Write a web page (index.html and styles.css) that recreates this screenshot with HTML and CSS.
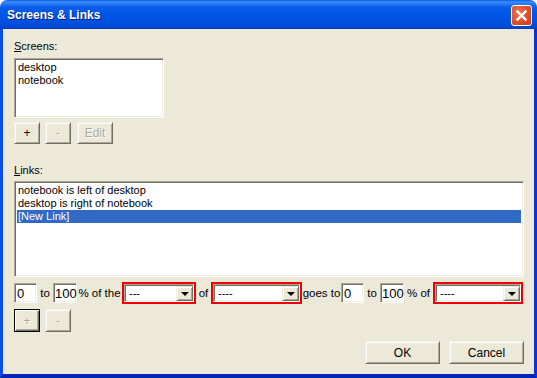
FILE: index.html
```html
<!DOCTYPE html>
<html>
<head>
<meta charset="utf-8">
<title>Screens &amp; Links</title>
<link rel="stylesheet" href="styles.css">
</head>
<body>
<div class="window">
  <div class="titlebar">
    <span class="title">Screens &amp; Links</span>
    <div class="close">
      <svg width="13" height="13" viewBox="0 0 13 13"><path d="M2.5 2.5 L10.5 10.5 M10.5 2.5 L2.5 10.5" stroke="#fff" stroke-width="2.4" stroke-linecap="square"/></svg>
    </div>
  </div>
  <div class="client">
    <div class="label"><u>S</u>creens:</div>
    <div class="listbox screens">
      <div class="item">desktop</div>
      <div class="item">notebook</div>
    </div>
    <div class="btnrow top-buttons">
      <div class="btn sq">+</div>
      <div class="btn sq disabled">-</div>
      <div class="btn edit disabled">Edit</div>
    </div>
    <div class="label links-label"><u>L</u>inks:</div>
    <div class="listbox links">
      <div class="item">notebook is left of desktop</div>
      <div class="item">desktop is right of notebook</div>
      <div class="item selected">[New Link]</div>
    </div>
    <div class="linkrow">
      <div class="field num">0</div>
      <span class="txt t-to">to</span>
      <div class="field num wide">100</div>
      <span class="txt t-ofthe">% of the</span>
      <div class="combo c1"><div class="cfield"><span class="cval">---</span><div class="dd"><span class="arrow"></span></div></div></div>
      <span class="txt t-of">of</span>
      <div class="combo c2"><div class="cfield"><span class="cval">----</span><div class="dd"><span class="arrow"></span></div></div></div>
      <span class="txt t-goes">goes to</span>
      <div class="field num">0</div>
      <span class="txt t-to">to</span>
      <div class="field num wide">100</div>
      <span class="txt t-pof">% of</span>
      <div class="combo c3"><div class="cfield"><span class="cval">----</span><div class="dd"><span class="arrow"></span></div></div></div>
    </div>
    <div class="btnrow link-buttons">
      <div class="btn sq tall default disabled">+</div>
      <div class="btn sq tall disabled">-</div>
    </div>
    <div class="dlgrow">
      <div class="btn dlg">OK</div>
      <div class="btn dlg">Cancel</div>
    </div>
  </div>
</div>
</body>
</html>
```

FILE: styles.css
```css
html, body {
  margin: 0;
  padding: 0;
  background: #ffffff;
}

.window {
  width: 537px;
  height: 378px;
  display: flex;
  flex-direction: column;
  font-family: "Liberation Sans", Arial, sans-serif;
  font-size: 11px;
  color: #000;
}

.titlebar {
  height: 29px;
  flex: none;
  display: flex;
  align-items: center;
  justify-content: space-between;
  padding: 0 5px 0 7px;
  border-radius: 7px 7px 0 0;
  background: linear-gradient(to bottom,
    #0A5EEA 0px, #3C8DF8 2px, #2A78F2 4px, #0C5EE9 7px,
    #0056E6 14px, #0052E2 20px, #004CDA 25px, #0043CC 28px, #003CC0 29px);
  box-sizing: border-box;
}

.title {
  color: #fff;
  font-family: "Liberation Sans", Arial, sans-serif;
  font-weight: bold;
  font-size: 12px;
  text-shadow: 1px 1px 0 #0A1D7A;
  margin-top: 1px;
}

.close {
  width: 21px;
  height: 21px;
  box-sizing: border-box;
  border: 1px solid #fff;
  border-radius: 3px;
  background: radial-gradient(circle at 35% 35%, #EE7552 0%, #DD4F2A 55%, #C43C17 100%);
  display: flex;
  align-items: center;
  justify-content: center;
  margin-top: 1px;
}

.client {
  flex: 1;
  background: #ECE9D8;
  border-left: 3px solid #0A4DE6;
  border-right: 3px solid #0736D8;
  border-bottom: 4px solid #0426B8;
  padding: 11px 10px 0 11px;
  display: flex;
  flex-direction: column;
  align-items: flex-start;
}

.label {
  line-height: 13px;
  height: 13px;
}

.links-label {
  margin-top: 20px;
}

.listbox {
  box-sizing: border-box;
  background: #fff;
  border: 1px solid;
  border-color: #ACA899 #fff #fff #ACA899;
  box-shadow: inset 1px 1px 0 #716F64, inset -1px -1px 0 #F1EFE2;
  padding: 2px 2px;
}

.screens {
  width: 150px;
  height: 60px;
  margin-top: 5px;
}

.links {
  width: 510px;
  height: 96px;
  margin-top: 4px;
  align-self: stretch;
}

.item {
  height: 13px;
  line-height: 13px;
  padding-left: 1px;
  white-space: nowrap;
}

.item.selected {
  background: #316AC5;
  color: #fff;
}

.btnrow {
  display: flex;
}

.top-buttons {
  margin-top: 4px;
  gap: 5px;
}

.btn {
  box-sizing: border-box;
  height: 22px;
  display: flex;
  align-items: center;
  justify-content: center;
  background: #ECE9D8;
  border: 1px solid;
  border-color: #F1EFE2 #716F64 #716F64 #F1EFE2;
  box-shadow: inset 1px 1px 0 #fff, inset -1px -1px 0 #ACA899;
  font-size: 12px;
}

.btn.sq {
  width: 26px;
}

.btn.edit {
  width: 36px;
  margin-left: 1px;
}

.btn.disabled {
  color: #ACA899;
  text-shadow: 1px 1px 0 #fff;
}

.link-buttons {
  margin-top: 5px;
  gap: 5px;
}

.btn.tall {
  height: 23px;
}

.btn.default {
  border-color: #000;
  box-shadow: inset 1px 1px 0 #fff, inset -1px -1px 0 #716F64, inset -2px -2px 0 #ACA899;
}

.linkrow {
  margin-top: 5px;
  height: 22px;
  display: flex;
  align-items: center;
}

.field {
  box-sizing: border-box;
  height: 20px;
  background: #fff;
  border: 1px solid;
  border-color: #ACA899 #fff #fff #ACA899;
  box-shadow: inset 1px 1px 0 #716F64, inset -1px -1px 0 #F1EFE2;
  padding: 2px 0 0 2px;
  line-height: 15px;
  font-size: 13px;
}

.field.num {
  width: 23px;
}

.field.num.wide {
  width: 24px;
  padding-left: 1px;
}

.txt {
  text-align: center;
  white-space: nowrap;
  font-size: 11.5px;
}

.t-to { width: 16px; }
.t-ofthe { width: 45px; }
.t-of { width: 15px; }
.t-goes { width: 39px; }
.t-pof { width: 29px; }

.combo {
  box-sizing: border-box;
  height: 22px;
  border: 2px solid #F00000;
  background: #ECE9D8;
  padding: 0;
}

.c1 { width: 74px; }
.c2 { width: 91px; }
.c3 { width: 90px; }

.cfield {
  box-sizing: border-box;
  height: 18px;
  background: #fff;
  border: 1px solid;
  border-color: #ACA899 #fff #fff #ACA899;
  box-shadow: inset 1px 1px 0 #716F64, inset -1px -1px 0 #F1EFE2;
  display: flex;
  align-items: stretch;
  padding: 1px 0 0 1px;
}

.cval {
  flex: 1;
  line-height: 15px;
  padding-left: 3px;
}

.dd {
  width: 17px;
  box-sizing: border-box;
  background: #ECE9D8;
  border: 1px solid;
  border-color: #F1EFE2 #716F64 #716F64 #F1EFE2;
  box-shadow: inset 1px 1px 0 #fff, inset -1px -1px 0 #ACA899;
  display: flex;
  align-items: center;
  justify-content: center;
}

.arrow {
  width: 0;
  height: 0;
  border-left: 4px solid transparent;
  border-right: 4px solid transparent;
  border-top: 4px solid #000;
  margin-top: 1px;
}

.dlgrow {
  margin-top: 9px;
  align-self: flex-end;
  display: flex;
  gap: 9px;
}

.btn.dlg {
  width: 75px;
  height: 23px;
  font-size: 12px;
}
```
